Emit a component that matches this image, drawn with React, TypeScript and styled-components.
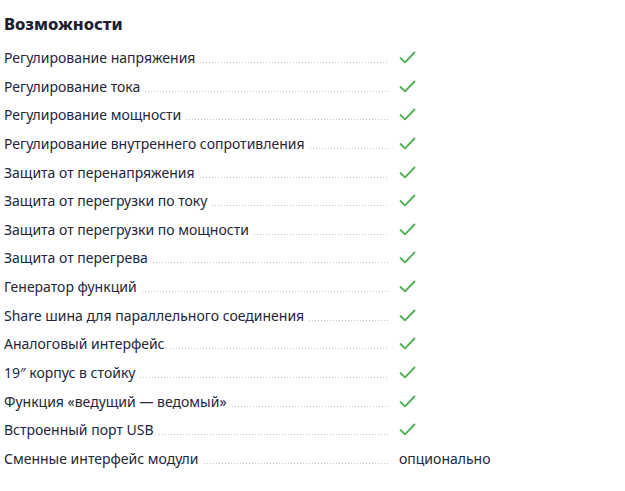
import React from "react";
import styled, { createGlobalStyle } from "styled-components";

const Global = createGlobalStyle`
  html, body { margin: 0; padding: 0; background: #fff; }
  body { font-family: "Noto Sans", "Liberation Sans", sans-serif; color: #1f2335; }
`;

const Wrap = styled.div`
  width: 625px;
  padding: 12px 0 0 4px;
  box-sizing: border-box;
`;

const Title = styled.h2`
  margin: 0 0 8px 0;
  font-size: 16.5px;
  font-weight: 800;
  line-height: 24px;
  color: #1c2030;
`;

const List = styled.div`
  display: flex;
  flex-direction: column;
  width: 490px;
`;

const Row = styled.div`
  display: flex;
  align-items: baseline;
  height: 28.64px;
  font-size: 14px;
  line-height: 28px;
`;

const Label = styled.span`
  white-space: nowrap;
  color: #23263a;
`;

const Leader = styled.span`
  flex: 1;
  height: 1px;
  margin: 0 10px 0 5px;
  background-image: linear-gradient(to right, #bfc1cf 1px, transparent 1px);
  background-size: 3px 1px;
  background-repeat: repeat-x;
`;

const Value = styled.span`
  width: 95px;
  flex: none;
  display: flex;
  align-items: center;
  color: #23263a;
`;

const Check = () => (
  <svg width="17" height="13" viewBox="0 0 17 13" style={{ transform: "translateY(1px)" }}>
    <path d="M1.5 7 L6 11.3 L15.5 1.5" fill="none" stroke="#4caf50" strokeWidth="1.8" strokeLinecap="round" strokeLinejoin="round" />
  </svg>
);

const items: [string, string | null][] = [
  ["Регулирование напряжения", null],
  ["Регулирование тока", null],
  ["Регулирование мощности", null],
  ["Регулирование внутреннего сопротивления", null],
  ["Защита от перенапряжения", null],
  ["Защита от перегрузки по току", null],
  ["Защита от перегрузки по мощности", null],
  ["Защита от перегрева", null],
  ["Генератор функций", null],
  ["Share шина для параллельного соединения", null],
  ["Аналоговый интерфейс", null],
  ["19″ корпус в стойку", null],
  ["Функция «ведущий — ведомый»", null],
  ["Встроенный порт USB", null],
  ["Сменные интерфейс модули", "опционально"],
];

export default function App() {
  return (
    <Wrap>
      <Global />
      <Title>Возможности</Title>
      <List>
        {items.map(([l, v]) => (
          <Row key={l}>
            <Label>{l}</Label>
            <Leader />
            <Value>{v ? v : <Check />}</Value>
          </Row>
        ))}
      </List>
    </Wrap>
  );
}
